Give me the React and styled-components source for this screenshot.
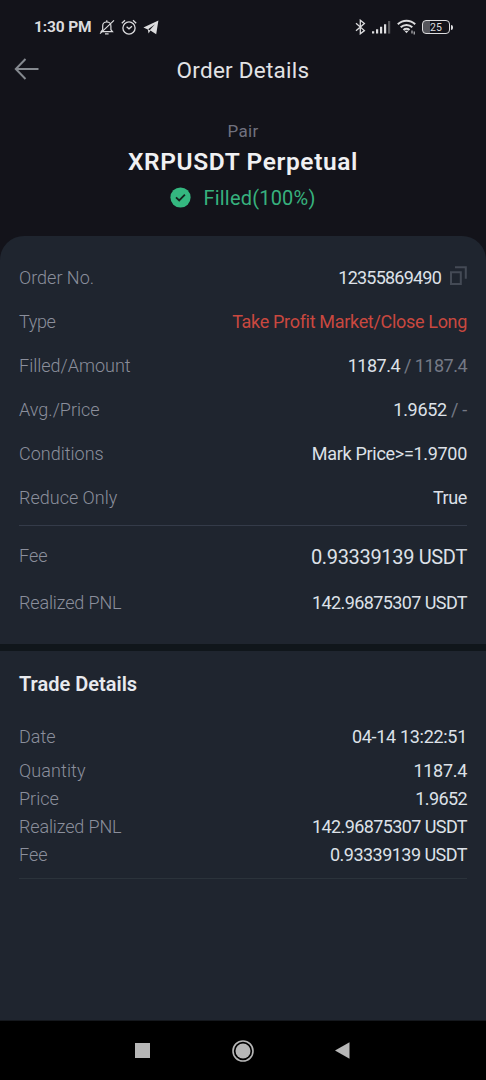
import React from "react";
import styled, { createGlobalStyle } from "styled-components";

const GlobalStyle = createGlobalStyle`
  * { box-sizing: border-box; }
  body { margin: 0; background: #13131a; font-family: Roboto, "Noto Sans", sans-serif; }
  svg { display: block; flex: none; }
`;

const Screen = styled.main`
  display: flex;
  flex-direction: column;
  width: 486px;
  height: 1080px;
  overflow: hidden;
  background: #13131a;
  color: #e6e9ee;
  white-space: nowrap;
`;

const StatusBar = styled.header`
  display: flex;
  align-items: center;
  height: 54px;
  padding: 0 33px 0 34px;
  color: #dcdcde;
`;

const Clock = styled.span`
  width: 65px;
  font-size: 15.5px;
  font-weight: 700;
  letter-spacing: -0.15px;
`;

const StatusIcons = styled.div`
  display: flex;
  align-items: center;
  gap: ${(p) => p.$gap}px;
  margin-left: ${(p) => (p.$end ? "auto" : 0)};
`;

const TitleBar = styled.div`
  display: grid;
  grid-template-columns: 60px 1fr 60px;
  align-items: center;
  height: 32px;
`;

const BackButton = styled.button`
  display: flex;
  padding: 0 0 3px 14px;
  border: 0;
  background: none;
  color: #85898f;
`;

const Title = styled.h1`
  margin: 0;
  text-align: center;
  font-size: 22.5px;
  font-weight: 400;
  line-height: 32px;
  color: #e2e2e5;
  letter-spacing: 0.25px;
`;

const Summary = styled.section`
  display: flex;
  flex-direction: column;
  align-items: center;
  height: 150px;
  padding-top: 34px;
`;

const PairLabel = styled.span`
  font-size: 17px;
  line-height: 22px;
  color: #70717f;
  letter-spacing: 0.3px;
`;

const PairName = styled.h2`
  margin: 4px 0 0;
  font-size: 24.5px;
  font-weight: 600;
  line-height: 32px;
  color: #f0f0f2;
  letter-spacing: 0.62px;
`;

const FillStatus = styled.div`
  display: flex;
  align-items: center;
  gap: 12px;
  margin-top: 6px;
  height: 28px;
  font-size: 20px;
  color: #37b17e;
  letter-spacing: 0.2px;
`;

const Panel = styled.section`
  flex: none;
  height: ${(p) => p.$height}px;
  padding: ${(p) => p.$top}px 19px 0;
  background: #1f252f;
  border-radius: ${(p) => (p.$rounded ? "24px 24px 0 0" : 0)};
`;

const Row = styled.div`
  display: flex;
  align-items: center;
  justify-content: space-between;
  height: ${(p) => p.$height || 44}px;
`;

const Label = styled.span`
  font-size: 18px;
  font-weight: 300;
  color: #8b8f9c;
  letter-spacing: ${(p) => p.$track || 0}px;
`;

const Value = styled.span`
  display: flex;
  align-items: center;
  padding-top: ${(p) => p.$drop || 0}px;
  font-size: ${(p) => p.$size || 18}px;
  color: ${(p) => p.$color || "#dde1e8"};
  letter-spacing: ${(p) => p.$track ?? -0.6}px;
  white-space: pre;
`;

const Muted = styled.span`
  color: #747985;
`;

const CopyButton = styled.button`
  display: flex;
  margin: -3px 0 0 9px;
  padding: 0;
  border: 0;
  background: none;
  color: #444a55;
`;

const Divider = styled.hr`
  height: 1px;
  margin: ${(p) => p.$margin};
  border: 0;
  background: ${(p) => p.$color};
`;

const Band = styled.div`
  flex: none;
  height: 7px;
  background: #10161b;
`;

const SectionTitle = styled.h3`
  margin: 0 0 20px;
  font-size: 20px;
  font-weight: 600;
  line-height: 28px;
  color: #e8eaee;
`;

const NavBar = styled.nav`
  display: flex;
  align-items: center;
  justify-content: space-between;
  height: 60px;
  padding: 0 136px 0 135px;
  background: #000;
  border-top: 1px solid #15181d;
`;

const BellOff = () => (
  <svg width="16" height="17" viewBox="0 0 16 17" fill="none" stroke="currentColor" strokeWidth="1.2">
    <path d="M3.7 10.7V6.9C3.7 4.5 5.3 3 7.8 3s4.1 1.5 4.1 3.9v3.8l1.6 2H2.2z" />
    <path d="M7.8 3V1.2M6 14.9h3.6M15 1.4 1 14.6" />
  </svg>
);

const Alarm = () => (
  <svg width="16" height="17" viewBox="0 0 16 17" fill="none" stroke="currentColor" strokeWidth="1.3">
    <circle cx="8" cy="9" r="6.1" />
    <path d="M5.6 7.8 8 9.8l3-2.6M.8 4.2 4 1.2M15.2 4.2 12 1.2" />
  </svg>
);

const Plane = () => (
  <svg width="16" height="15" viewBox="0 0 16 15" fill="currentColor">
    <path d="M.4 7.6 15.4.6 13.2 14.2 7.4 10.4 5.6 13.4 4.8 9.4z" />
    <path d="M5.2 9.2 12 4.2 6.6 10.2" fill="#13131a" />
  </svg>
);

const Bluetooth = () => (
  <svg width="11" height="16" viewBox="0 0 11 16" fill="none" stroke="currentColor" strokeWidth="1.3">
    <path d="m1 4.3 8.4 7.3-4.1 3.2V1.2l4.1 3.3L1 11.8" />
  </svg>
);

const Signal = () => (
  <svg width="19" height="14" viewBox="0 0 19 14" fill="currentColor">
    <path d="M0 11.2h2.2V13.6H0zM4 9.2h2.2v4.4H4zM8 6.8h2.2v6.8H8zM12 4.2h2.2v9.4H12z" />
    <path d="M16 1h2.2v12.6H16z" opacity=".35" />
  </svg>
);

const Wifi = () => (
  <svg width="19" height="16" viewBox="0 0 19 16" fill="none" stroke="currentColor" strokeWidth="2">
    <path d="M.8 5.2c5-4.7 12.5-4.7 17.4 0M3.7 8.2c3.3-3.1 8.3-3.1 11.6 0M6.5 11c1.7-1.6 4.3-1.6 6 0" />
    <path d="m7.4 11.8 2.1 2.4 2.1-2.4z" fill="currentColor" stroke="none" />
    <path d="M15 11.5v3M17.2 12.5v3" strokeWidth="1" />
  </svg>
);

const BatteryBody = styled.span`
  display: flex;
  align-items: center;
  justify-content: center;
  width: 28px;
  height: 14px;
  border: 1.5px solid currentColor;
  border-radius: 4px;
  background: linear-gradient(90deg, #55555b 25%, transparent 25%);
  font-size: 10.5px;
`;

const BatteryTip = styled.span`
  width: 2px;
  height: 5px;
  border-radius: 0 2px 2px 0;
  background: currentColor;
`;

const BackArrow = () => (
  <svg width="25" height="24" viewBox="0 0 25 24" fill="none" stroke="currentColor" strokeWidth="2">
    <path d="M11.5 2 1.8 12l9.7 10M2 12h22.5" />
  </svg>
);

const FilledCheck = () => (
  <svg width="21" height="23" viewBox="0 0 21 23">
    <circle cx="10.5" cy="10.5" r="10.1" fill="#34b880" />
    <path d="m6 10.4 3.2 3.1 5.7-5.9" fill="none" stroke="#15251f" strokeWidth="1.8" />
  </svg>
);

const CopyIcon = () => (
  <svg width="17" height="19" viewBox="0 0 17 19" fill="none" stroke="currentColor" strokeWidth="2">
    <path d="M1 6.3h9.8V18H1zM5 1.2h10.8v11.5" />
  </svg>
);

const orderRows = [
  { label: "Type", labelTrack: -0.4, value: "Take Profit Market/Close Long", color: "#c9483f", track: -0.32 },
  { label: "Filled/Amount", value: "1187.4", rest: " / 1187.4", track: -0.52 },
  { label: "Avg./Price", value: "1.9652", rest: " / -", track: -0.3 },
  { label: "Conditions", value: "Mark Price>=1.9700", track: -0.3 },
  { label: "Reduce Only", value: "True", track: -0.4 },
];

const tradeRows = [
  { label: "Date", value: "04-14 13:22:51", height: 36, track: -0.3 },
  { label: "Quantity", labelTrack: 0.1, value: "1187.4", height: 33, track: -0.3 },
  { label: "Price", value: "1.9652", height: 23 },
  { label: "Realized PNL", labelTrack: -0.15, value: "142.96875307 USDT", height: 33 },
  { label: "Fee", value: "0.93339139 USDT", height: 23, track: -0.53 },
];

export default function App() {
  return (
    <Screen>
      <GlobalStyle />
      <StatusBar>
        <Clock>1:30 PM</Clock>
        <StatusIcons $gap={6}>
          <BellOff />
          <Alarm />
          <Plane />
        </StatusIcons>
        <StatusIcons $gap={6} $end>
          <Bluetooth />
          <Signal />
          <Wifi />
          <StatusIcons $gap={1}>
            <BatteryBody>25</BatteryBody>
            <BatteryTip />
          </StatusIcons>
        </StatusIcons>
      </StatusBar>
      <TitleBar>
        <BackButton aria-label="Back">
          <BackArrow />
        </BackButton>
        <Title>Order Details</Title>
      </TitleBar>
      <Summary>
        <PairLabel>Pair</PairLabel>
        <PairName>XRPUSDT Perpetual</PairName>
        <FillStatus>
          <FilledCheck />
          <span>Filled(100%)</span>
        </FillStatus>
      </Summary>
      <Panel $height={408} $top={19} $rounded>
        <Row>
          <Label>Order No.</Label>
          <Value $track={-0.78}>
            12355869490
            <CopyButton aria-label="Copy">
              <CopyIcon />
            </CopyButton>
          </Value>
        </Row>
        {orderRows.map((r) => (
          <Row key={r.label}>
            <Label $track={r.labelTrack}>{r.label}</Label>
            <Value $color={r.color} $track={r.track}>
              {r.value}
              {r.rest && <Muted>{r.rest}</Muted>}
            </Value>
          </Row>
        ))}
        <Divider $margin="6px 0 6px" $color="#343b49" />
        <Row $height={47}>
          <Label>Fee</Label>
          <Value $size={20} $track={-0.33} $drop={3}>0.93339139 USDT</Value>
        </Row>
        <Row $height={47}>
          <Label $track={-0.15}>Realized PNL</Label>
          <Value>142.96875307 USDT</Value>
        </Row>
      </Panel>
      <Band />
      <Panel $height={369} $top={19}>
        <SectionTitle>Trade Details</SectionTitle>
        {tradeRows.map((r) => (
          <Row key={r.label} $height={r.height}>
            <Label $track={r.labelTrack}>{r.label}</Label>
            <Value $track={r.track}>{r.value}</Value>
          </Row>
        ))}
        <Divider $margin="12px 0 0" $color="#2b333b" />
      </Panel>
      <NavBar>
        <svg width="15" height="15" viewBox="0 0 15 15" fill="#b7b7b7">
          <path d="M0 0h15v15H0z" />
        </svg>
        <svg width="22" height="22" viewBox="0 0 22 22">
          <circle cx="11" cy="11" r="10" fill="none" stroke="#b7b7b7" strokeWidth="1.6" />
          <circle cx="11" cy="11" r="7.5" fill="#b7b7b7" />
        </svg>
        <svg width="15" height="17" viewBox="0 0 15 17" fill="#b7b7b7">
          <path d="M0 8.5 14.5.2v16.6z" />
        </svg>
      </NavBar>
    </Screen>
  );
}
